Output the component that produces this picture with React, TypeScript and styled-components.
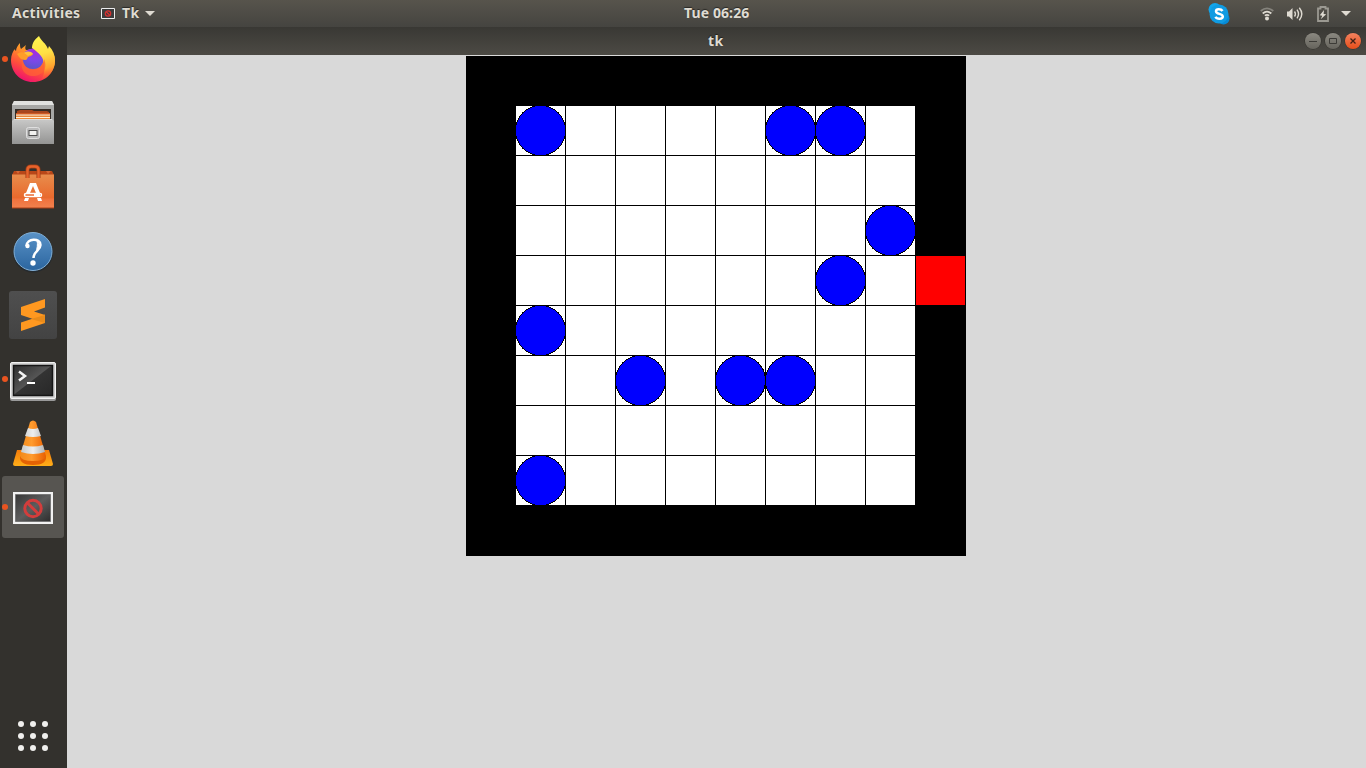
import React from "react";
import styled, { createGlobalStyle } from "styled-components";

const GlobalStyle = createGlobalStyle`
  * { box-sizing: border-box; }
  body { margin: 0; overflow: hidden; background: #d9d9d9; }
  svg { display: block; flex: none; }
`;

const Desktop = styled.div`
  display: flex;
  flex-direction: column;
  width: 1366px;
  height: 768px;
  font-family: "Noto Sans", "Open Sans", sans-serif;
  font-size: 14px;
  font-weight: 700;
`;

const TopBar = styled.header`
  display: grid;
  grid-template-columns: 684px auto 1fr;
  align-items: center;
  height: 27px;
  background: linear-gradient(#57544c, #454440);
  color: #dfdbd2;
  text-shadow: 0 -1px 1px rgba(0, 0, 0, 0.5);
`;

const BarGroup = styled.div<{ $end?: boolean }>`
  display: flex;
  align-items: center;
  height: 27px;
  padding: ${(p) => (p.$end ? "0 15px 0 0" : "0 0 0 12px")};
  justify-content: ${(p) => (p.$end ? "flex-end" : "flex-start")};
`;

const BarText = styled.span<{ $width: number; $spacing?: number }>`
  width: ${(p) => p.$width}px;
  height: 27px;
  line-height: 26px;
  letter-spacing: ${(p) => p.$spacing ?? 0}px;
  white-space: nowrap;
`;

const Gap = styled.span<{ $size: number }>`
  width: ${(p) => p.$size}px;
  flex: none;
`;

const Body = styled.div`
  display: flex;
  height: 741px;
`;

const Dock = styled.nav`
  display: flex;
  flex-direction: column;
  width: 67px;
  height: 100%;
  background: #33312d;
`;

const DockItem = styled.div<{ $drop: number }>`
  position: relative;
  display: flex;
  align-items: center;
  justify-content: center;
  width: 66px;
  height: 64px;
  padding-top: ${(p) => p.$drop * 2}px;
`;

const ActiveTile = styled.div`
  display: flex;
  align-items: center;
  justify-content: center;
  width: 62px;
  height: 62px;
  padding-top: 2px;
  border-radius: 3px;
  background: #575551;
`;

const RunningDot = styled.i`
  position: absolute;
  left: 2px;
  top: 29px;
  width: 6px;
  height: 6px;
  border-radius: 50%;
  background: #e95420;
`;

const AppsButton = styled.div`
  display: grid;
  grid-template-columns: repeat(3, 6px);
  gap: 6px;
  margin: auto 0 17px 18px;
`;

const AppsDot = styled.i`
  width: 6px;
  height: 6px;
  border-radius: 50%;
  background: #f0efed;
`;

const Window = styled.main`
  flex: 1;
  display: flex;
  flex-direction: column;
  background: #d9d9d9;
`;

const TitleBar = styled.div`
  display: grid;
  grid-template-columns: 641px auto 1fr;
  align-items: center;
  height: 28px;
  background: linear-gradient(#393834, #4c4a44);
  color: #dfdbd2;
  text-shadow: 0 -1px 1px rgba(0, 0, 0, 0.5);
`;

const TitleText = styled.span`
  grid-column: 2;
  line-height: 26px;
  padding-bottom: 1px;
  letter-spacing: 0.5px;
`;

const WindowButtons = styled.div`
  display: flex;
  justify-content: flex-end;
  gap: 4px;
  padding-right: 5px;
`;

const WindowButton = styled.div<{ $close?: boolean }>`
  display: flex;
  align-items: center;
  justify-content: center;
  width: 16px;
  height: 16px;
  border-radius: 50%;
  background: ${(p) =>
    p.$close ? "linear-gradient(#f3825f, #e64e1a)" : "linear-gradient(#8b8981, #66645d)"};
  box-shadow: 0 0 0 0.5px #302f2b;
`;

const Board = styled.div`
  display: grid;
  grid-template-columns: repeat(10, 50px);
  grid-auto-rows: 50px;
  width: 500px;
  margin: 1px 400px 0 auto;
  background: #000;
`;

const cellColors = { wall: "#000", open: "#fff", exit: "#f00" };

const Cell = styled.div<{ $kind: keyof typeof cellColors }>`
  position: relative;
  border: solid #000;
  border-width: 0 1px 1px 0;
  background: ${(p) => cellColors[p.$kind]};
`;

const PieceLayer = styled.svg`
  position: absolute;
  left: -1px;
  top: -1px;
  z-index: 1;
`;

const Piece = () => (
  <PieceLayer width="51" height="51" shapeRendering="crispEdges">
    <circle cx="25.5" cy="25.5" r="25" fill="#00f" stroke="#000" />
    <path d="M.5 22v7M50.500 22v7" stroke="#000" />
  </PieceLayer>
);

const rows = [
  "##########",
  "#o....oo.#",
  "#........#",
  "#.......o#",
  "#......o.X",
  "#o.......#",
  "#..o.oo..#",
  "#........#",
  "#o.......#",
  "##########",
];

const Firefox = () => (
  <svg width="46" height="48" viewBox="0 0 46 48">
    <defs>
      <linearGradient id="ffBody" x1=".8" y1=".1" x2=".35" y2="1">
        <stop offset="0" stopColor="#ffbd2e" />
        <stop offset=".35" stopColor="#ff8a2a" />
        <stop offset=".65" stopColor="#ff4f3c" />
        <stop offset="1" stopColor="#f0116e" />
      </linearGradient>
      <radialGradient id="ffGlobe" cx=".6" cy=".1" r=".9">
        <stop offset="0" stopColor="#a928e0" />
        <stop offset=".55" stopColor="#7b48e8" />
        <stop offset="1" stopColor="#5b55c8" />
      </radialGradient>
      <linearGradient id="ffTail" x1=".4" y1="0" x2=".55" y2="1">
        <stop offset="0" stopColor="#fff44f" />
        <stop offset=".4" stopColor="#ffe045" />
        <stop offset=".75" stopColor="#ffa22e" />
        <stop offset="1" stopColor="#ff5a38" stopOpacity="0" />
      </linearGradient>
    </defs>
    <path d="M10 8c0 3 0 4 1 6l5-4c-1 2-1 4 0 5 3 0 6-1 8 0l16 0c4 3 5 7 5 10 0 12-9 22-22 22S1 37 1 25c0-5 2-9 4-11 0 1 0 1 1 2 0-3 2-6 4-8z" fill="url(#ffBody)" />
    <circle cx="23" cy="24" r="10.500" fill="url(#ffGlobe)" />
    <path d="M29 1c2 5 7 7 9 13l1-3c4 4 6 9 6 15 0 9-6 16-14 19 3-4 4-9 3-15 0-8-5-12-12-17 0-5 3-9 7-12z" fill="url(#ffTail)" />
    <path d="M13 24c0 7 5 10 10 10 6 0 11-4 11-10 4 9-1 17-11 17-8 0-14-7-10-17z" fill="#ff6135" opacity=".75" />
    <path d="M7 19c3-2 5-2 9-1 2-1 5-1 7 1-1 2-3 2-5 3-1 2-1 3-3 3-4 0-6-3-8-6z" fill="#ff9d28" />
    <path d="M14 18c3-2 7-2 9 1-2 1-4 1-5 2-1-1-2-2-4-3z" fill="#ffc13c" />
  </svg>
);

const Files = () => (
  <svg width="44" height="46" viewBox="0 0 44 46">
    <defs>
      <linearGradient id="cab" x2="0" y2="1">
        <stop stopColor="#c9c9c8" />
        <stop offset="1" stopColor="#949493" />
      </linearGradient>
    </defs>
    <path d="M3 1h38l2 4v34H1V5z" fill="#a7a7a5" />
    <path d="M3 1h38l2 4H1z" fill="#e1e1df" />
    <path d="M4 9h36v12H4z" fill="#342c25" />
    <path d="M6 11l3-1h12l2 1h13l2 1v3H6z" fill="#a8461e" />
    <path d="M5 13h34v2H5z" fill="#cf5a22" />
    <path d="M5 14.500h34V18H5z" fill="#fff2da" />
    <path d="M5 15.500h34V17H5z" fill="#e8873d" />
    <path d="M5 18h34v3H5z" fill="#f18935" />
    <path d="M3 19h38l2 2v23H1V21z" fill="url(#cab)" />
    <path d="M3 19.500h38" stroke="#dededc" />
    <rect x="15.500" y="27.500" width="13" height="11" rx="2" fill="#bbb" stroke="#dfdfdf" />
    <rect x="18" y="30.500" width="8" height="5" fill="#f1f1ef" stroke="#4e4e4e" />
  </svg>
);

const Software = () => (
  <svg width="42" height="46" viewBox="0 0 42 46">
    <defs>
      <linearGradient id="bag" x2="0" y2="1">
        <stop stopColor="#e88d4c" />
        <stop offset=".7" stopColor="#e9692d" />
        <stop offset=".73" stopColor="#ef723d" />
        <stop offset="1" stopColor="#f2814e" />
      </linearGradient>
    </defs>
    <path d="M2 7h38l2 4H0z" fill="#b94718" />
    <path d="M4 7l2 3 2-3h26l2 3 3-3" fill="#d46636" />
    <path d="M0 10.500h42V44H0z" fill="url(#bag)" />
    <path d="M0 44h42" stroke="#ab3f16" />
    <path d="M15.500 14V6q0-3.500 3.500-3.500h4q3.500 0 3.500 3.500v8" fill="none" stroke="#9f3e17" strokeWidth="4" />
    <path d="M15.500 14V6q0-3.500 3.500-3.500h4q3.500 0 3.500 3.500v8" fill="none" stroke="#e7622b" strokeWidth="2.5" />
    <path d="M18 19h6l4 10h-4l-3-7-3 7h-4zM13 34h4l-1 3h-4zM25 34h4l1 3h-4z" fill="#fff" />
    <rect x="12.500" y="29.500" width="17" height="3" rx="1.500" fill="#eb6a30" stroke="#fff" strokeWidth="1.500" />
    <path d="M22 31h6" stroke="#fff" strokeWidth="2" />
  </svg>
);

const Help = () => (
  <svg width="42" height="42" viewBox="0 0 42 42">
    <defs>
      <linearGradient id="help" x2="0" y2="1">
        <stop stopColor="#5992c7" />
        <stop offset="1" stopColor="#2b659f" />
      </linearGradient>
    </defs>
    <circle cx="21" cy="21.500" r="20" fill="#252a2e" />
    <circle cx="21" cy="20.500" r="19" fill="url(#help)" stroke="#82afd5" />
    <path d="M14.500 15c0-8 14-8.500 14-1 0 6-7 6-7 13" fill="none" stroke="#fff" strokeWidth="2.500" />
    <path d="M25 9.500c4 4 2 9-1 12 1-4 2-8 1-12z" fill="#fff" stroke="#fff" />
    <circle cx="15.500" cy="15" r="2.200" fill="#fff" />
    <circle cx="21" cy="32" r="2.700" fill="#fff" />
  </svg>
);

const Sublime = () => (
  <svg width="48" height="48" viewBox="0 0 48 48">
    <defs>
      <linearGradient id="subBg" x2="0" y2="1">
        <stop stopColor="#4f4f4f" />
        <stop offset="1" stopColor="#434343" />
      </linearGradient>
    </defs>
    <rect width="48" height="48" rx="3" fill="url(#subBg)" />
    <path d="M12 31.500l24-8V32l-24 8z" fill="#ff9820" />
    <path d="M12 16l24-8v8.500l-11 4L36 24v8l-24-8z" fill="#ff9820" />
    <path d="M22 28l14-4v8z" fill="#e98b1a" />
  </svg>
);

const Terminal = () => (
  <svg width="46" height="39" viewBox="0 0 46 39">
    <defs>
      <linearGradient id="term" x2="1" y2="1">
        <stop stopColor="#2e2e2e" />
        <stop offset=".48" stopColor="#555" />
        <stop offset=".5" stopColor="#333" />
        <stop offset="1" stopColor="#282828" />
      </linearGradient>
    </defs>
    <rect y="2" width="46" height="37" rx="2" fill="#999" />
    <rect x=".5" y=".5" width="45" height="36" rx="1.500" fill="#d2d2d2" stroke="#f2f2f2" />
    <rect x="3.500" y="3.500" width="39" height="30" fill="url(#term)" stroke="#151515" strokeWidth="1.500" />
    <path d="M9 9.500l6 4.500-6 4.500" fill="none" stroke="#f4f4f4" strokeWidth="2.500" />
    <path d="M17 21h8" stroke="#fff" strokeWidth="2" />
  </svg>
);

const Vlc = () => (
  <svg width="42" height="48" viewBox="0 0 42 48">
    <defs>
      <linearGradient id="cone" x2="1">
        <stop stopColor="#f28a19" />
        <stop offset=".45" stopColor="#ff9b2e" />
        <stop offset="1" stopColor="#e85e00" />
      </linearGradient>
      <linearGradient id="base" x2="0" y2="1">
        <stop stopColor="#f57c0a" />
        <stop offset="1" stopColor="#ffae19" />
      </linearGradient>
      <linearGradient id="band" x2="1">
        <stop stopColor="#c6c9ca" />
        <stop offset=".5" stopColor="#eee" />
        <stop offset="1" stopColor="#aeb2b4" />
      </linearGradient>
    </defs>
    <path d="M5 31h32l4 14q0 2-2 2H3q-2 0-2-2z" fill="url(#base)" />
    <path d="M8 37h26q1 9-13 9T8 37z" fill="#e36204" />
    <path d="M18 3q3-3 6 0l10 34q-1 5-13 5T8 37z" fill="url(#cone)" />
    <path d="M16 9q5 2 10 0l3 8q-8 2-16 0zM11 26q10 3 20 0l2 7q-12 4-24 0z" fill="url(#band)" />
  </svg>
);

const TkIcon = ({ width = 40, height = 32 }: { width?: number; height?: number }) => (
  <svg width={width} height={height} viewBox="0 0 40 32" preserveAspectRatio="none">
    <defs>
      <linearGradient id="tk" x2="1" y2="1">
        <stop stopColor="#373737" />
        <stop offset=".5" stopColor="#5d5d5d" />
        <stop offset="1" stopColor="#2d2d2d" />
      </linearGradient>
    </defs>
    <path d="M0 0h40v32H0z" fill="#f2f2f2" />
    <path d="M2.500 2.500h35v27h-35z" fill="url(#tk)" stroke="#777" />
    <circle cx="20" cy="16.500" r="8.200" fill="none" stroke="#d33d3c" strokeWidth="3" />
    <path d="M14 10.500l12 12" stroke="#d33d3c" strokeWidth="3" />
  </svg>
);

const SmallTkIcon = () => (
  <svg width="14" height="11" viewBox="0 0 14 11">
    <path d="M.5.5h13v10H.5z" fill="#3c3c3c" stroke="#ececec" />
    <circle cx="7" cy="5.500" r="2.700" fill="none" stroke="#d6302f" strokeWidth="1.200" />
    <path d="M5 3.500l4 4" stroke="#d6302f" strokeWidth="1.200" />
  </svg>
);

const Caret = () => (
  <svg width="10" height="5"><path d="M0 0h10L5 5z" fill="#dfdbd2" /></svg>
);

const Skype = () => (
  <svg width="22" height="22" viewBox="0 0 22 22">
    <circle cx="7" cy="6.500" r="6.500" fill="#12a5ea" />
    <circle cx="15.500" cy="15.500" r="6" fill="#078ad5" />
    <circle cx="11" cy="11" r="9.500" fill="#109be2" />
    <path d="M14.500 8C13 5.500 8 5.500 8 8.200c0 3.300 6.800 2 6.800 5.300 0 3-6 3-7.300.3" fill="none" stroke="#fff" strokeWidth="2.500" />
  </svg>
);

const Wifi = () => (
  <svg width="14" height="14" viewBox="0 0 14 14" fill="none" strokeWidth="1.700">
    <path d="M.7 4Q7-1.300 13.300 4" stroke="#85837c" />
    <path d="M2.700 6.500q4.300-3.600 8.600 0" stroke="#dfdbd2" />
    <path d="M4.800 8.700q2.200-1.700 4.400 0" stroke="#dfdbd2" />
    <circle cx="7" cy="11.500" r="2" fill="#dfdbd2" />
  </svg>
);

const Volume = () => (
  <svg width="16" height="14" viewBox="0 0 16 14" fill="none" stroke="#dfdbd2" strokeWidth="1.400">
    <path d="M0 4.500h2L5.500 1v12L2 9.500H0z" fill="#dfdbd2" stroke="none" />
    <path d="M7.500 4.500q1.800 2.500 0 5M10 2.700q3 4.300 0 8.600M12.300.7q5 6.300 0 12.600" />
  </svg>
);

const Battery = () => (
  <svg width="12" height="16" viewBox="0 0 12 16">
    <path d="M3.500 2.500V1h5v1.500H11V15H1V2.500z" fill="none" stroke="#9b9992" strokeWidth="1.800" />
    <path d="M7 4L2.800 9.300l2.500.4-1.600 3.600 5.500-5-2.600-.4z" fill="#dfdbd2" />
  </svg>
);

const dockItems = [
  { icon: Firefox, running: true },
  { icon: Files },
  { icon: Software },
  { icon: Help, drop: 1 },
  { icon: Sublime },
  { icon: Terminal, running: true, drop: 2 },
  { icon: Vlc },
  { icon: TkIcon, running: true, active: true },
];

export default function App() {
  return (
    <>
      <GlobalStyle />
      <Desktop>
        <TopBar>
          <BarGroup>
            <BarText $width={89} $spacing={0.35}>Activities</BarText>
            <SmallTkIcon />
            <Gap $size={7} />
            <BarText $width={23} $spacing={0.3}>Tk</BarText>
            <Caret />
          </BarGroup>
          <BarText $width={66} $spacing={0.1}>Tue 06:26</BarText>
          <BarGroup $end>
            <Skype />
            <Gap $size={30} />
            <Wifi />
            <Gap $size={13} />
            <Volume />
            <Gap $size={14} />
            <Battery />
            <Gap $size={12} />
            <Caret />
          </BarGroup>
        </TopBar>
        <Body>
          <Dock>
            {dockItems.map(({ icon: Icon, running, active, drop = 0 }, i) => (
              <DockItem key={i} $drop={drop}>
                {active ? <ActiveTile><Icon /></ActiveTile> : <Icon />}
                {running && <RunningDot />}
              </DockItem>
            ))}
            <AppsButton>
              {Array.from({ length: 9 }, (_, i) => <AppsDot key={i} />)}
            </AppsButton>
          </Dock>
          <Window>
            <TitleBar>
              <span />
              <TitleText>tk</TitleText>
              <WindowButtons>
                <WindowButton>
                  <svg width="8" height="8"><path d="M0 4.500h8" stroke="#3c3b37" /></svg>
                </WindowButton>
                <WindowButton>
                  <svg width="8" height="8"><path d="M.5 1.500h7v5h-7z" fill="none" stroke="#3c3b37" /></svg>
                </WindowButton>
                <WindowButton $close>
                  <svg width="8" height="8"><path d="M1.500 1.500l5 5m0-5l-5 5" stroke="#402015" strokeWidth="1.300" /></svg>
                </WindowButton>
              </WindowButtons>
            </TitleBar>
            <Board>
              {rows.flatMap((row, y) =>
                row.split("").map((c, x) => (
                  <Cell key={`${x}-${y}`} $kind={c === "#" ? "wall" : c === "X" ? "exit" : "open"}>
                    {c === "o" && <Piece />}
                  </Cell>
                ))
              )}
            </Board>
          </Window>
        </Body>
      </Desktop>
    </>
  );
}
